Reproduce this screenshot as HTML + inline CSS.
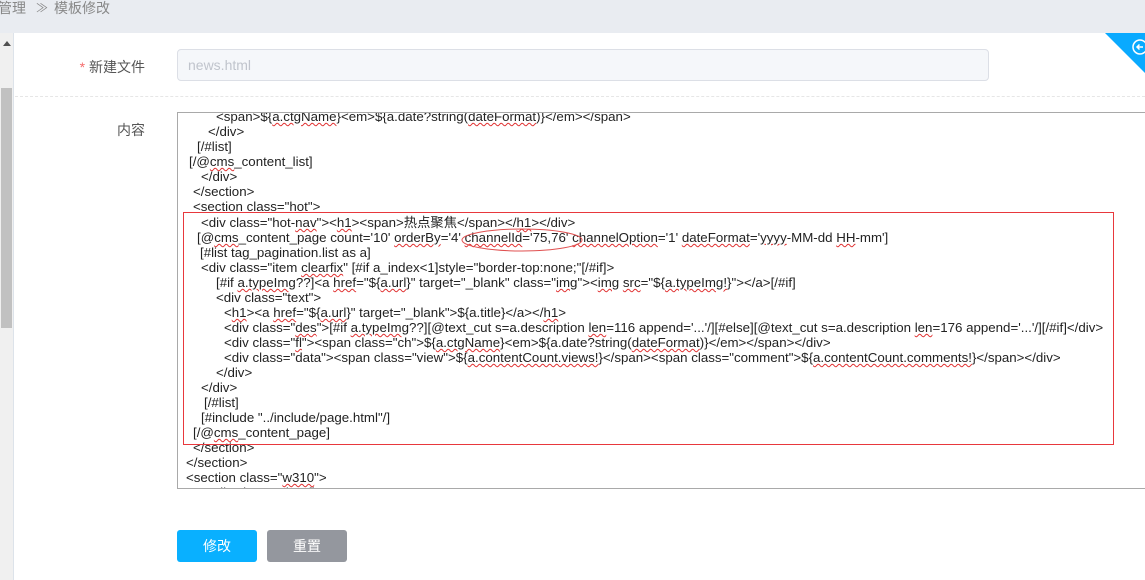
<!DOCTYPE html>
<html><head><meta charset="utf-8"><style>
*{margin:0;padding:0;box-sizing:border-box}
body{width:1145px;height:580px;overflow:hidden;background:#fff;font-family:"Liberation Sans","Noto Sans CJK SC",sans-serif;position:relative}
.top{position:absolute;left:0;top:0;width:1145px;height:33px;background:#e9ecf1;color:#888;font-size:14px;line-height:16px;padding-top:0}
.top span{position:absolute;top:0}
.sb{position:absolute;left:0;top:33px;width:14px;height:547px;background:#f0f0f0;border-right:1px solid #dde3ea}
.thumb{position:absolute;left:1px;top:55px;width:11px;height:240px;background:#c1c1c1}
.arr{position:absolute;left:3px;top:8px;width:0;height:0;border-left:4px solid transparent;border-right:4px solid transparent;border-bottom:5px solid #505050}
.lbl{position:absolute;font-size:14px;color:#555;text-align:right;width:120px}
.inp{position:absolute;left:177px;top:49px;width:812px;height:32px;background:#f5f7fa;border:1px solid #dcdfe6;border-radius:4px;color:#c0c4cc;font-size:14px;line-height:30px;padding-left:10px}
.dash{position:absolute;left:15px;top:96px;width:1130px;border-top:1px dashed #e6e6e6}
.ta{position:absolute;left:177px;top:112px;width:970px;height:377px;border:1px solid #a9a9a9;border-right:none;overflow:hidden}
.code{position:absolute;left:0;top:0;font-size:13.3px;color:#222;white-space:pre}
.code div{position:absolute;height:15px;line-height:15px}
u{text-decoration:underline wavy #e03030;text-decoration-thickness:1px;text-underline-offset:1px}
.red{position:absolute;left:183px;top:212px;width:931px;height:233px;border:1px solid #e8383d}
.btn{position:absolute;top:530px;width:80px;height:32px;border-radius:3px;color:#fff;font-size:14px;text-align:center;line-height:32px}
</style></head><body>
<div class="top"><span style="left:-2px">管理</span><span style="left:36px;font-size:12px">≫</span><span style="left:54px">模板修改</span></div>
<div class="sb"><div class="arr"></div><div class="thumb"></div></div>
<div class="lbl" style="left:25px;top:57px"><span style="color:#f56c6c">* </span>新建文件</div>
<div class="inp">news.html</div>
<div class="dash"></div>
<div class="lbl" style="left:25px;top:120px">内容</div>
<svg style="position:absolute;left:1105px;top:33px" width="40" height="40"><polygon points="0,0 40,0 40,40" fill="#09aaff"/><circle cx="35" cy="14" r="7" fill="none" stroke="#fff" stroke-width="1.5"/><path d="M38 14H32M34.5 11.5L32 14L34.5 16.5" fill="none" stroke="#fff" stroke-width="1.5"/></svg>
<div class="ta"><div class="code">
<div style="left:38px;top:-4px">&lt;span&gt;${<u>a.ctgName</u>}&lt;em&gt;${a.date?string(<u>dateFormat</u>)}&lt;/em&gt;&lt;/span&gt;</div>
<div style="left:30px;top:11px">&lt;/div&gt;</div>
<div style="left:19px;top:26px">[/#list]</div>
<div style="left:11px;top:41px">[/@<u>cms</u>_content_list]</div>
<div style="left:23px;top:56px">&lt;/div&gt;</div>
<div style="left:15px;top:71px">&lt;/section&gt;</div>
<div style="left:15px;top:86px">&lt;section class="hot"&gt;</div>
<div style="left:23px;top:102px">&lt;div class="hot-<u>nav</u>"&gt;&lt;<u>h1</u>&gt;&lt;span&gt;热点聚焦&lt;/span&gt;&lt;/<u>h1</u>&gt;&lt;/div&gt;</div>
<div style="left:19px;top:117px">[@<u>cms</u>_content_page count='10' <u>orderBy</u>='4' <u>channelId</u>='75,76' <u>channelOption</u>='1' <u>dateFormat</u>='<u>yyyy</u>-MM-dd <u>HH</u>-mm']</div>
<div style="left:22px;top:132px">[#list tag_pagination.list as a]</div>
<div style="left:23px;top:147px">&lt;div class="item <u>clearfix</u>" [#if a_index&lt;1]style="border-top:none;"[/#if]&gt;</div>
<div style="left:38px;top:162px">[#if <u>a.typeImg</u>??]&lt;a <u>href</u>="${<u>a.url</u>}" target="_blank" class="<u>img</u>"&gt;&lt;<u>img</u> <u>src</u>="${<u>a.typeImg!</u>}"&gt;&lt;/a&gt;[/#if]</div>
<div style="left:38px;top:177px">&lt;div class="text"&gt;</div>
<div style="left:46px;top:192px">&lt;<u>h1</u>&gt;&lt;a <u>href</u>="${<u>a.url</u>}" target="_blank"&gt;${a.title}&lt;/a&gt;&lt;/<u>h1</u>&gt;</div>
<div style="left:46px;top:207px">&lt;div class="<u>des</u>"&gt;[#if <u>a.typeImg</u>??][@text_cut s=a.description <u>len</u>=116 append='...'/][#else][@text_cut s=a.description <u>len</u>=176 append='...'/][/#if]&lt;/div&gt;</div>
<div style="left:46px;top:222px">&lt;div class="<u>fl</u>"&gt;&lt;span class="ch"&gt;${<u>a.ctgName</u>}&lt;em&gt;${a.date?string(<u>dateFormat</u>)}&lt;/em&gt;&lt;/span&gt;&lt;/div&gt;</div>
<div style="left:46px;top:237px">&lt;div class="data"&gt;&lt;span class="view"&gt;${<u>a.contentCount.views!</u>}&lt;/span&gt;&lt;span class="comment"&gt;${<u>a.contentCount.comments!</u>}&lt;/span&gt;&lt;/div&gt;</div>
<div style="left:38px;top:252px">&lt;/div&gt;</div>
<div style="left:23px;top:267px">&lt;/div&gt;</div>
<div style="left:26px;top:282px">[/#list]</div>
<div style="left:23px;top:297px">[#include "../include/page.html"/]</div>
<div style="left:15px;top:312px">[/@<u>cms</u>_content_page]</div>
<div style="left:15px;top:327px">&lt;/section&gt;</div>
<div style="left:8px;top:342px">&lt;/section&gt;</div>
<div style="left:8px;top:357px">&lt;section class="<u>w310</u>"&gt;</div>
<div style="left:30px;top:372px">&lt;div class="clearfix"&gt;</div>
</div></div>
<div class="red"></div>
<svg style="position:absolute;left:460px;top:226px" width="125" height="30"><ellipse cx="62" cy="14" rx="60" ry="11" fill="none" stroke="#e05050" stroke-width="1"/></svg>
<div class="btn" style="left:177px;background:#09b0ff">修改</div>
<div class="btn" style="left:267px;background:#94979e">重置</div>
</body></html>
